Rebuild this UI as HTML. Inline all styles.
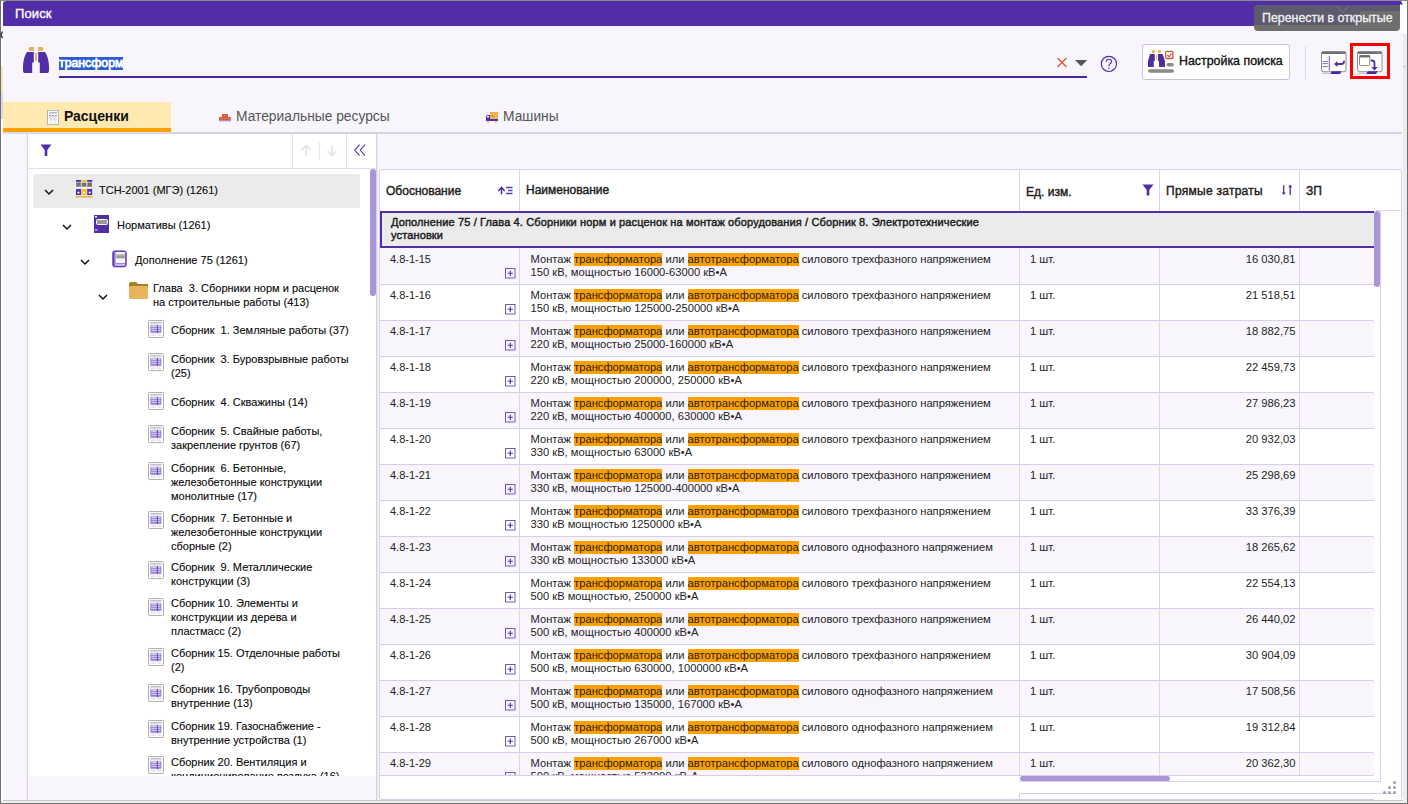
<!DOCTYPE html><html><head><meta charset="utf-8"><style>
*{box-sizing:border-box;margin:0;padding:0}
html,body{width:1408px;height:804px;overflow:hidden;background:#fff;font-family:"Liberation Sans",sans-serif;color:#222}
.a{position:absolute}
.t{position:absolute;white-space:pre;line-height:14px}
.m{-webkit-text-stroke:0.3px currentColor}
svg{position:absolute;overflow:visible}
</style></head><body>
<div class="a" style="left:0px;top:0px;width:1408px;height:804px;background:#fff;border:1px solid #707070;border-top-color:#8a8a8a"></div>
<div class="a" style="left:1402px;top:1px;width:5px;height:800px;background:#ececec"></div>
<div class="a" style="left:1402px;top:1px;width:5px;height:33px;background:#fff"></div>
<div class="a" style="left:1px;top:801px;width:1406px;height:2px;background:#efefef"></div>
<div class="a" style="left:1px;top:66px;width:2px;height:28px;background:#f2e4bc"></div>
<div class="a" style="left:1px;top:94px;width:2px;height:25px;background:#dcd5ee"></div>
<svg style="left:0px;top:31px" width="3" height="8" viewBox="0 0 3 8"><path d="M2.6 0.5 L0.6 3.8 L2.6 7.2" stroke="#333" stroke-width="1.4" fill="none"/></svg>
<div class="a" style="left:3px;top:26px;width:1400px;height:775px;background:#f8f5fc"></div>
<div class="a" style="left:3px;top:1px;width:1397px;height:25px;background:#512da8;border-top-left-radius:3px"></div>
<div class="t" style="left:15px;top:6.5px;color:#fff;font-size:13px;-webkit-text-stroke:0.35px #fff;letter-spacing:0.1px">Поиск</div>
<svg style="left:22px;top:46px" width="28" height="28" viewBox="0 0 28 28">
<rect x="7" y="1" width="5" height="4" fill="#e7b25c"/>
<rect x="16" y="1" width="5" height="4" fill="#e7b25c"/>
<rect x="13" y="7" width="2" height="8" fill="#e7b25c"/>
<path d="M5 6 H11.8 V16.6 H10.2 V27 H3 Q1 27 1 25 V20 Q1.5 11 5 6 Z" fill="#512da8"/>
<path d="M23 6 H16.2 V16.6 H17.8 V27 H25 Q27 27 27 25 V20 Q26.5 11 23 6 Z" fill="#512da8"/>
</svg>
<div class="a" style="left:59px;top:57px;width:64px;height:13px;background:#2b5bd7"></div>
<div class="t" style="left:59px;top:56px;color:#fff;font-size:12.3px;-webkit-text-stroke:0.75px #fff;line-height:15px">трансформ</div>
<div class="a" style="left:59px;top:76px;width:1028px;height:2px;background:#4a25a4"></div>
<svg style="left:1056px;top:57px" width="12" height="11" viewBox="0 0 12 11"><path d="M1.5 1 L10.5 10 M10.5 1 L1.5 10" stroke="#e0542a" stroke-width="1.25"/></svg>
<svg style="left:1075px;top:60px" width="13" height="7" viewBox="0 0 13 7"><path d="M0 0 H12.2 L6.1 6.2 Z" fill="#555"/></svg>
<svg style="left:1100px;top:55px" width="18" height="18" viewBox="0 0 18 18"><circle cx="8.9" cy="8.9" r="7.6" fill="none" stroke="#512da8" stroke-width="1.15"/><path d="M6.3 6.8 Q6.3 4.2 8.9 4.2 Q11.5 4.2 11.5 6.6 Q11.5 8.2 9.8 9 Q8.9 9.5 8.9 10.8 V11.3" stroke="#512da8" stroke-width="1.1" fill="none"/><circle cx="8.9" cy="13.3" r="0.75" fill="#512da8"/></svg>
<div class="a" style="left:1142px;top:44px;width:148px;height:36px;background:#fff;border:1px solid #cbbde8;border-radius:3px"></div>
<svg style="left:1147px;top:50px" width="28" height="24" viewBox="0 0 28 24">
<rect x="5" y="0.2" width="3" height="2.6" fill="#e7b25c"/>
<rect x="11" y="0.2" width="3" height="2.6" fill="#e7b25c"/>
<rect x="9" y="4.6" width="1.3" height="5" fill="#e7b25c"/>
<path d="M3 4 H7.8 V11 H6.8 V17 H1.3 Q1 17 1 16.5 V11 Z" fill="#4f2fa0"/>
<path d="M11 4 H15.6 L18 11 V16.5 Q18 17 17.5 17 H12 V11 H11 Z" fill="#4f2fa0"/>
<rect x="18.7" y="1.4" width="7.2" height="7.1" rx="1" fill="#fff" stroke="#d9503f" stroke-width="1.3"/>
<path d="M20.3 5 L22 6.6 L24.6 3.6" stroke="#d9503f" stroke-width="1.1" fill="none"/>
<rect x="19.5" y="13.1" width="7.4" height="3.4" rx="1.7" fill="#8a8a8a"/>
<rect x="1" y="19.3" width="26" height="3.4" rx="1.7" fill="#8a8a8a"/>
</svg>
<div class="t" style="left:1179px;top:54px;color:#111;font-size:12.4px;-webkit-text-stroke:0.35px #111;line-height:15px">Настройка поиска</div>
<div class="a" style="left:1305px;top:46px;width:1px;height:33px;background:#ddd6ee"></div>
<svg style="left:1320px;top:50px" width="28" height="25" viewBox="0 0 28 25"><rect x="1.5" y="1.75" width="24.5" height="20" rx="2" fill="#fff" stroke="#8e8e8e" stroke-width="1"/><rect x="1.5" y="1.5" width="24.5" height="2.6" rx="1" fill="#6e6e6e"/><path d="M21 2.8 H25" stroke="#bbb" stroke-width="0.7" stroke-dasharray="1 0.6"/><path d="M2 22.8 H10 L9.5 24 H3 Z" fill="#c4c4c4"/><path d="M12 21.3 H21.5 L20 24 H10 Z" fill="#4527a0"/>
<path d="M2.5 11.5 H8 M2.5 13.6 H8 M2.5 16.5 H8" stroke="#7e62c8" stroke-width="0.9"/>
<path d="M9.3 5.8 V20.6" stroke="#7e62c8" stroke-width="1.1"/>
<path d="M24 11.5 Q24 14 21.5 14 H16" stroke="#512da8" stroke-width="1.8" fill="none" stroke-linecap="round"/>
<path d="M17.5 11 L14 14 L17.5 17 Z" fill="#512da8"/>
</svg>
<div class="a" style="left:1350px;top:43px;width:40px;height:36px;border:3px solid #ff0000"></div>
<svg style="left:1356px;top:50px" width="28" height="25" viewBox="0 0 28 25"><rect x="1.5" y="1.75" width="24.5" height="20" rx="2" fill="#fff" stroke="#8e8e8e" stroke-width="1"/><rect x="1.5" y="1.5" width="24.5" height="2.6" rx="1" fill="#6e6e6e"/><path d="M21 2.8 H25" stroke="#bbb" stroke-width="0.7" stroke-dasharray="1 0.6"/><path d="M2 22.8 H10 L9.5 24 H3 Z" fill="#c4c4c4"/><path d="M12 21.3 H21.5 L20 24 H10 Z" fill="#4527a0"/>
<rect x="3.5" y="5.5" width="10.3" height="10" rx="1" fill="#fff" stroke="#8e8e8e" stroke-width="1"/>
<rect x="3.3" y="5.2" width="10.7" height="2.2" rx="0.8" fill="#6e6e6e"/>
<path d="M15.5 10.5 Q18.5 10.5 18.5 13 V18.5" stroke="#512da8" stroke-width="1.8" fill="none" stroke-linecap="round"/>
<path d="M15.3 17 L18.5 20.5 L21.7 17 Z" fill="#512da8"/>
</svg>
<div class="a" style="left:1403px;top:66px;width:3px;height:1px;background:#cbbde8"></div>
<div class="a" style="left:1400px;top:5px;width:7px;height:28px;background:#fff"></div>
<svg style="left:1398px;top:1px" width="6" height="5" viewBox="0 0 6 5"><path d="M0 0 H3 L5 3.5 H0 Z" fill="#512da8"/></svg>
<div class="a" style="left:1254px;top:5px;width:146px;height:26px;background:#6e6e6e;border-radius:4px;border-top-right-radius:0"></div>
<div class="a" style="left:1254px;top:5px;width:106px;height:20px;background:#5e5a6e;border-top-left-radius:4px"></div>
<div class="a" style="left:1360px;top:5px;width:40px;height:6px;background:#5e5a6e"></div>
<svg style="left:1336px;top:6px" width="14" height="8" viewBox="0 0 14 8"><path d="M0.5 0.5 L6.5 6.5 L12.5 0.5" stroke="#8a8694" stroke-width="0.7" fill="none"/></svg>
<div class="t" style="left:1262px;top:11px;color:#f2f2f2;font-size:12.4px;-webkit-text-stroke:0.3px #f2f2f2;line-height:15px">Перенести в открытые</div>
<div class="a" style="left:3px;top:102px;width:168px;height:26px;background:#ffe9b0"></div>
<div class="a" style="left:3px;top:128px;width:168px;height:4px;background:#ffa000"></div>
<div class="a" style="left:3px;top:132px;width:1399px;height:2px;background:#d6d3dc"></div>
<div class="a" style="left:3px;top:132px;width:168px;height:2px;background:#d8d8e6"></div>
<svg style="left:47px;top:110px" width="12" height="15" viewBox="0 0 12 15">
<rect x="0.5" y="0.6" width="11" height="13.8" fill="#fff" stroke="#b4b4b4"/>
<rect x="2" y="2.2" width="8" height="1.4" fill="#b0b0b0"/>
<path d="M2 5.5 H4 M4.8 5.5 H7.2 M8 5.5 H10" stroke="#9a7fd8" stroke-width="1"/>
<rect x="2" y="6.2" width="8" height="4.6" fill="#e8e8e8"/>
<path d="M4.4 6.2 V10.8 M7.6 6.2 V10.8" stroke="#d0d0d0" stroke-width="0.6"/>
<path d="M2 12.3 H5.3 M7 12.3 H10" stroke="#cfcfcf" stroke-width="0.7"/>
</svg>
<div class="t" style="left:64px;top:108px;color:#111;font-size:14px;font-weight:bold;letter-spacing:-0.05px;line-height:16px">Расценки</div>
<svg style="left:218px;top:113px" width="14" height="10" viewBox="0 0 14 10">
<rect x="4" y="1" width="6" height="3" fill="#dc5a3c"/>
<rect x="1" y="4" width="11.8" height="3" fill="#dc5a3c"/>
<path d="M6.5 5.5 H7.5 M3 5.5 H4 M10 5.5 H11 M6.5 2.5 H7.5" stroke="#f3b8a8" stroke-width="0.6"/>
<rect x="1" y="7" width="12" height="1.3" fill="#a58be0"/>
</svg>
<div class="t" style="left:236px;top:109px;color:#555;font-size:13.8px;line-height:16px">Материальные ресурсы</div>
<svg style="left:485px;top:111px" width="14" height="13" viewBox="0 0 14 13">
<rect x="5" y="1" width="8" height="7" fill="#f0b450"/>
<circle cx="7.5" cy="5" r="0.8" fill="#777"/>
<path d="M1 10 V6 Q1 4 3 4 H5 V9.5 H13 V10 Z" fill="#512da8"/>
<rect x="2" y="5" width="2" height="1.5" fill="#fff"/>
<rect x="1" y="8" width="12" height="2" fill="#512da8"/>
<circle cx="3" cy="11" r="1.2" fill="#ccc"/><circle cx="11" cy="11" r="1.2" fill="#ccc"/>
</svg>
<div class="t" style="left:503px;top:109px;color:#555;font-size:13.8px;line-height:16px">Машины</div>
<div class="a" style="left:27px;top:134px;width:350px;height:667px;background:#fff;border-left:1px solid #d8cdee"></div>
<div class="a" style="left:27px;top:168px;width:350px;height:1px;background:#e3dbf3"></div>
<div class="a" style="left:292px;top:134px;width:1px;height:34px;background:#e6e0f2"></div>
<div class="a" style="left:346px;top:134px;width:1px;height:34px;background:#e6e0f2"></div>
<div class="a" style="left:319px;top:142px;width:1px;height:18px;background:#e9e3f5"></div>
<svg style="left:40px;top:144px" width="13" height="13" viewBox="0 0 13 13"><path d="M0.5 0.5 H11.5 L7.3 6 V12 H4.7 V6 Z" fill="#512da8"/></svg>
<svg style="left:300px;top:144px" width="12" height="13" viewBox="0 0 12 13"><path d="M6 12 V1.5 M1.5 6 L6 1.5 L10.5 6" stroke="#e4e4e4" stroke-width="1.6" fill="none"/></svg>
<svg style="left:326px;top:144px" width="12" height="13" viewBox="0 0 12 13"><path d="M6 1 V11.5 M1.5 7 L6 11.5 L10.5 7" stroke="#e4e4e4" stroke-width="1.6" fill="none"/></svg>
<svg style="left:354px;top:144px" width="13" height="13" viewBox="0 0 13 13"><path d="M5.6 0.6 L0.8 6.1 L5.6 11.6 M11 0.6 L6.2 6.1 L11 11.6" stroke="#5b3dbb" stroke-width="1.1" fill="none"/></svg>
<div class="a" style="left:28px;top:776px;width:348px;height:25px;background:#f8f5fc"></div>
<div class="a" style="left:376px;top:134px;width:1px;height:667px;background:#d6d4da"></div>
<div class="a" style="left:377px;top:134px;width:1px;height:667px;background:#eaeaea"></div>
<div class="a" style="left:370px;top:169px;width:6px;height:127px;background:#a994d5;border-radius:3px"></div>
<div class="a" style="left:33px;top:174px;width:327px;height:34px;background:#ebebeb;border-radius:2px"></div>
<svg style="left:44px;top:189px" width="10" height="6" viewBox="0 0 10 6"><path d="M1 1 L5 5 L9 1" stroke="#111" stroke-width="1.45" fill="none"/></svg>
<svg style="left:75px;top:180px" width="18" height="18" viewBox="0 0 18 18">
<rect x="1" y="1.6" width="5" height="7.6" fill="#c9bde8"/>
<rect x="1" y="0" width="5" height="1.8" fill="#512da8"/>
<rect x="1.3" y="2.7" width="4.4" height="4" fill="#6e6e6e"/>
<rect x="1.3" y="5.6" width="4.4" height="1.1" fill="#8e8e8e"/>
<rect x="1.3" y="7" width="4.4" height="1.5" fill="#fff"/>
<rect x="1" y="9.1" width="5" height="5.9" fill="#512da8"/>
<circle cx="3.5" cy="12.6" r="1.1" fill="#fff"/>
<rect x="6.5" y="1.6" width="5" height="7.6" fill="#f6e2a0"/>
<rect x="6.5" y="0" width="5" height="1.8" fill="#f0c020"/>
<rect x="6.8" y="2.7" width="4.4" height="4" fill="#6e6e6e"/>
<rect x="6.8" y="5.6" width="4.4" height="1.1" fill="#8e8e8e"/>
<rect x="6.8" y="7" width="4.4" height="1.5" fill="#fff"/>
<rect x="6.5" y="9.1" width="5" height="5.9" fill="#f0c020"/>
<circle cx="9.0" cy="12.6" r="1.1" fill="#fff"/>
<rect x="12.2" y="1.6" width="5" height="7.6" fill="#c9bde8"/>
<rect x="12.2" y="0" width="5" height="1.8" fill="#512da8"/>
<rect x="12.5" y="2.7" width="4.4" height="4" fill="#6e6e6e"/>
<rect x="12.5" y="5.6" width="4.4" height="1.1" fill="#8e8e8e"/>
<rect x="12.5" y="7" width="4.4" height="1.5" fill="#fff"/>
<rect x="12.2" y="9.1" width="5" height="5.9" fill="#512da8"/>
<circle cx="14.7" cy="12.6" r="1.1" fill="#fff"/>
<rect x="0.5" y="15.9" width="17" height="1.7" fill="#e8b45e"/>
</svg>
<div class="t" style="left:99px;top:183.2px;color:#0a0a0a;font-size:11px;-webkit-text-stroke:0.12px #0a0a0a">ТСН-2001 (МГЭ) (1261)</div>
<svg style="left:62px;top:224px" width="10" height="6" viewBox="0 0 10 6"><path d="M1 1 L5 5 L9 1" stroke="#111" stroke-width="1.45" fill="none"/></svg>
<svg style="left:94px;top:215px" width="15" height="18" viewBox="0 0 15 18">
<rect x="0" y="0" width="15" height="18" fill="#512da8"/>
<rect x="1" y="1" width="2" height="1.5" fill="#fff"/>
<rect x="2.5" y="4.5" width="11" height="5" rx="1" fill="#9a9a9a" stroke="#fff" stroke-width="1"/>
<rect x="1" y="14.5" width="2.5" height="1" fill="#fff"/>
</svg>
<div class="t" style="left:117px;top:218.2px;color:#0a0a0a;font-size:11px;-webkit-text-stroke:0.12px #0a0a0a">Нормативы (1261)</div>
<svg style="left:80px;top:259px" width="10" height="6" viewBox="0 0 10 6"><path d="M1 1 L5 5 L9 1" stroke="#111" stroke-width="1.45" fill="none"/></svg>
<svg style="left:112px;top:250px" width="15" height="18" viewBox="0 0 15 18">
<rect x="0.5" y="0.8" width="14" height="16.2" rx="2.2" fill="#5a36b4" stroke="#7e62cc" stroke-width="0.8"/>
<rect x="2.6" y="2" width="10.6" height="13.6" fill="#fff"/>
<rect x="2.6" y="2" width="1" height="13.6" fill="#8e74d4"/>
<rect x="4.2" y="3.6" width="8.6" height="1.6" fill="#c8c8c8"/>
<rect x="4.2" y="5.2" width="8.6" height="3" fill="#9c9c9c"/>
<rect x="4.2" y="8.2" width="8.6" height="1.2" fill="#d4d4d4"/>
<rect x="4" y="13.2" width="9.2" height="1.2" fill="#7e62cc"/>
</svg>
<div class="t" style="left:135px;top:253.2px;color:#0a0a0a;font-size:11px;-webkit-text-stroke:0.12px #0a0a0a">Дополнение 75 (1261)</div>
<svg style="left:98px;top:294px" width="10" height="6" viewBox="0 0 10 6"><path d="M1 1 L5 5 L9 1" stroke="#111" stroke-width="1.45" fill="none"/></svg>
<svg style="left:129px;top:282px" width="19" height="17" viewBox="0 0 19 17">
<path d="M0 2 Q0 0 2 0 H7 L9 2 H19 V5 H0 Z" fill="#a87d2e"/>
<rect x="0" y="4" width="19" height="13" rx="1" fill="#e8b45e"/>
</svg>
<div class="t" style="left:153px;top:281.2px;color:#0a0a0a;font-size:11px;-webkit-text-stroke:0.12px #0a0a0a">Глава  3. Сборники норм и расценок</div>
<div class="t" style="left:153px;top:295.2px;color:#0a0a0a;font-size:11px;-webkit-text-stroke:0.12px #0a0a0a">на строительные работы (413)</div>
<div class="a" style="left:28px;top:169px;width:340px;height:607px;overflow:hidden">
<svg style="left:120px;top:151.3px" width="16" height="18" viewBox="0 0 16 18">
<rect x="0.5" y="0.5" width="15" height="17" rx="0.8" fill="#fff" stroke="#b0b0b0"/>
<rect x="2.2" y="1.8" width="11.5" height="1.8" fill="#c4c4c4"/>
<rect x="2.2" y="4.7" width="11.2" height="8.6" rx="1" fill="#b6a3e4"/>
<path d="M3.4 6.2 H8.8 M10 6.2 H12.2 M3.4 8.2 H8.8 M10 8.2 H12.2 M3.4 10.2 H8.8 M10 10.2 H12.2" stroke="#fff" stroke-width="1"/>
<path d="M9.4 5 V13" stroke="#5a3cb8" stroke-width="0.9"/>
<path d="M2.5 7.2 H13.2 M2.5 9.2 H13.2 M2.5 11.2 H13.2" stroke="#6a4cc0" stroke-width="0.6"/>
<path d="M3 15.1 H7.7 M9.2 15.1 H13.4" stroke="#c8c8c8" stroke-width="0.8"/>
</svg>
<div class="t" style="left:143px;top:154.2px;color:#0a0a0a;font-size:11px;-webkit-text-stroke:0.12px #0a0a0a">Сборник  1. Земляные работы (37)</div>
<svg style="left:120px;top:184.4px" width="16" height="18" viewBox="0 0 16 18">
<rect x="0.5" y="0.5" width="15" height="17" rx="0.8" fill="#fff" stroke="#b0b0b0"/>
<rect x="2.2" y="1.8" width="11.5" height="1.8" fill="#c4c4c4"/>
<rect x="2.2" y="4.7" width="11.2" height="8.6" rx="1" fill="#b6a3e4"/>
<path d="M3.4 6.2 H8.8 M10 6.2 H12.2 M3.4 8.2 H8.8 M10 8.2 H12.2 M3.4 10.2 H8.8 M10 10.2 H12.2" stroke="#fff" stroke-width="1"/>
<path d="M9.4 5 V13" stroke="#5a3cb8" stroke-width="0.9"/>
<path d="M2.5 7.2 H13.2 M2.5 9.2 H13.2 M2.5 11.2 H13.2" stroke="#6a4cc0" stroke-width="0.6"/>
<path d="M3 15.1 H7.7 M9.2 15.1 H13.4" stroke="#c8c8c8" stroke-width="0.8"/>
</svg>
<div class="t" style="left:143px;top:182.5px;color:#0a0a0a;font-size:11px;-webkit-text-stroke:0.12px #0a0a0a">Сборник  3. Буровзрывные работы</div>
<div class="t" style="left:143px;top:196.5px;color:#0a0a0a;font-size:11px;-webkit-text-stroke:0.12px #0a0a0a">(25)</div>
<svg style="left:120px;top:223.4px" width="16" height="18" viewBox="0 0 16 18">
<rect x="0.5" y="0.5" width="15" height="17" rx="0.8" fill="#fff" stroke="#b0b0b0"/>
<rect x="2.2" y="1.8" width="11.5" height="1.8" fill="#c4c4c4"/>
<rect x="2.2" y="4.7" width="11.2" height="8.6" rx="1" fill="#b6a3e4"/>
<path d="M3.4 6.2 H8.8 M10 6.2 H12.2 M3.4 8.2 H8.8 M10 8.2 H12.2 M3.4 10.2 H8.8 M10 10.2 H12.2" stroke="#fff" stroke-width="1"/>
<path d="M9.4 5 V13" stroke="#5a3cb8" stroke-width="0.9"/>
<path d="M2.5 7.2 H13.2 M2.5 9.2 H13.2 M2.5 11.2 H13.2" stroke="#6a4cc0" stroke-width="0.6"/>
<path d="M3 15.1 H7.7 M9.2 15.1 H13.4" stroke="#c8c8c8" stroke-width="0.8"/>
</svg>
<div class="t" style="left:143px;top:226.2px;color:#0a0a0a;font-size:11px;-webkit-text-stroke:0.12px #0a0a0a">Сборник  4. Скважины (14)</div>
<svg style="left:120px;top:256.3px" width="16" height="18" viewBox="0 0 16 18">
<rect x="0.5" y="0.5" width="15" height="17" rx="0.8" fill="#fff" stroke="#b0b0b0"/>
<rect x="2.2" y="1.8" width="11.5" height="1.8" fill="#c4c4c4"/>
<rect x="2.2" y="4.7" width="11.2" height="8.6" rx="1" fill="#b6a3e4"/>
<path d="M3.4 6.2 H8.8 M10 6.2 H12.2 M3.4 8.2 H8.8 M10 8.2 H12.2 M3.4 10.2 H8.8 M10 10.2 H12.2" stroke="#fff" stroke-width="1"/>
<path d="M9.4 5 V13" stroke="#5a3cb8" stroke-width="0.9"/>
<path d="M2.5 7.2 H13.2 M2.5 9.2 H13.2 M2.5 11.2 H13.2" stroke="#6a4cc0" stroke-width="0.6"/>
<path d="M3 15.1 H7.7 M9.2 15.1 H13.4" stroke="#c8c8c8" stroke-width="0.8"/>
</svg>
<div class="t" style="left:143px;top:255.4px;color:#0a0a0a;font-size:11px;-webkit-text-stroke:0.12px #0a0a0a">Сборник  5. Свайные работы,</div>
<div class="t" style="left:143px;top:269.4px;color:#0a0a0a;font-size:11px;-webkit-text-stroke:0.12px #0a0a0a">закрепление грунтов (67)</div>
<svg style="left:120px;top:292.6px" width="16" height="18" viewBox="0 0 16 18">
<rect x="0.5" y="0.5" width="15" height="17" rx="0.8" fill="#fff" stroke="#b0b0b0"/>
<rect x="2.2" y="1.8" width="11.5" height="1.8" fill="#c4c4c4"/>
<rect x="2.2" y="4.7" width="11.2" height="8.6" rx="1" fill="#b6a3e4"/>
<path d="M3.4 6.2 H8.8 M10 6.2 H12.2 M3.4 8.2 H8.8 M10 8.2 H12.2 M3.4 10.2 H8.8 M10 10.2 H12.2" stroke="#fff" stroke-width="1"/>
<path d="M9.4 5 V13" stroke="#5a3cb8" stroke-width="0.9"/>
<path d="M2.5 7.2 H13.2 M2.5 9.2 H13.2 M2.5 11.2 H13.2" stroke="#6a4cc0" stroke-width="0.6"/>
<path d="M3 15.1 H7.7 M9.2 15.1 H13.4" stroke="#c8c8c8" stroke-width="0.8"/>
</svg>
<div class="t" style="left:143px;top:291.7px;color:#0a0a0a;font-size:11px;-webkit-text-stroke:0.12px #0a0a0a">Сборник  6. Бетонные,</div>
<div class="t" style="left:143px;top:305.7px;color:#0a0a0a;font-size:11px;-webkit-text-stroke:0.12px #0a0a0a">железобетонные конструкции</div>
<div class="t" style="left:143px;top:319.7px;color:#0a0a0a;font-size:11px;-webkit-text-stroke:0.12px #0a0a0a">монолитные (17)</div>
<svg style="left:120px;top:342.3px" width="16" height="18" viewBox="0 0 16 18">
<rect x="0.5" y="0.5" width="15" height="17" rx="0.8" fill="#fff" stroke="#b0b0b0"/>
<rect x="2.2" y="1.8" width="11.5" height="1.8" fill="#c4c4c4"/>
<rect x="2.2" y="4.7" width="11.2" height="8.6" rx="1" fill="#b6a3e4"/>
<path d="M3.4 6.2 H8.8 M10 6.2 H12.2 M3.4 8.2 H8.8 M10 8.2 H12.2 M3.4 10.2 H8.8 M10 10.2 H12.2" stroke="#fff" stroke-width="1"/>
<path d="M9.4 5 V13" stroke="#5a3cb8" stroke-width="0.9"/>
<path d="M2.5 7.2 H13.2 M2.5 9.2 H13.2 M2.5 11.2 H13.2" stroke="#6a4cc0" stroke-width="0.6"/>
<path d="M3 15.1 H7.7 M9.2 15.1 H13.4" stroke="#c8c8c8" stroke-width="0.8"/>
</svg>
<div class="t" style="left:143px;top:341.5px;color:#0a0a0a;font-size:11px;-webkit-text-stroke:0.12px #0a0a0a">Сборник  7. Бетонные и</div>
<div class="t" style="left:143px;top:355.5px;color:#0a0a0a;font-size:11px;-webkit-text-stroke:0.12px #0a0a0a">железобетонные конструкции</div>
<div class="t" style="left:143px;top:369.5px;color:#0a0a0a;font-size:11px;-webkit-text-stroke:0.12px #0a0a0a">сборные (2)</div>
<svg style="left:120px;top:392.4px" width="16" height="18" viewBox="0 0 16 18">
<rect x="0.5" y="0.5" width="15" height="17" rx="0.8" fill="#fff" stroke="#b0b0b0"/>
<rect x="2.2" y="1.8" width="11.5" height="1.8" fill="#c4c4c4"/>
<rect x="2.2" y="4.7" width="11.2" height="8.6" rx="1" fill="#b6a3e4"/>
<path d="M3.4 6.2 H8.8 M10 6.2 H12.2 M3.4 8.2 H8.8 M10 8.2 H12.2 M3.4 10.2 H8.8 M10 10.2 H12.2" stroke="#fff" stroke-width="1"/>
<path d="M9.4 5 V13" stroke="#5a3cb8" stroke-width="0.9"/>
<path d="M2.5 7.2 H13.2 M2.5 9.2 H13.2 M2.5 11.2 H13.2" stroke="#6a4cc0" stroke-width="0.6"/>
<path d="M3 15.1 H7.7 M9.2 15.1 H13.4" stroke="#c8c8c8" stroke-width="0.8"/>
</svg>
<div class="t" style="left:143px;top:391.2px;color:#0a0a0a;font-size:11px;-webkit-text-stroke:0.12px #0a0a0a">Сборник  9. Металлические</div>
<div class="t" style="left:143px;top:405.2px;color:#0a0a0a;font-size:11px;-webkit-text-stroke:0.12px #0a0a0a">конструкции (3)</div>
<svg style="left:120px;top:428.5px" width="16" height="18" viewBox="0 0 16 18">
<rect x="0.5" y="0.5" width="15" height="17" rx="0.8" fill="#fff" stroke="#b0b0b0"/>
<rect x="2.2" y="1.8" width="11.5" height="1.8" fill="#c4c4c4"/>
<rect x="2.2" y="4.7" width="11.2" height="8.6" rx="1" fill="#b6a3e4"/>
<path d="M3.4 6.2 H8.8 M10 6.2 H12.2 M3.4 8.2 H8.8 M10 8.2 H12.2 M3.4 10.2 H8.8 M10 10.2 H12.2" stroke="#fff" stroke-width="1"/>
<path d="M9.4 5 V13" stroke="#5a3cb8" stroke-width="0.9"/>
<path d="M2.5 7.2 H13.2 M2.5 9.2 H13.2 M2.5 11.2 H13.2" stroke="#6a4cc0" stroke-width="0.6"/>
<path d="M3 15.1 H7.7 M9.2 15.1 H13.4" stroke="#c8c8c8" stroke-width="0.8"/>
</svg>
<div class="t" style="left:143px;top:427.2px;color:#0a0a0a;font-size:11px;-webkit-text-stroke:0.12px #0a0a0a">Сборник 10. Элементы и</div>
<div class="t" style="left:143px;top:441.2px;color:#0a0a0a;font-size:11px;-webkit-text-stroke:0.12px #0a0a0a">конструкции из дерева и</div>
<div class="t" style="left:143px;top:455.2px;color:#0a0a0a;font-size:11px;-webkit-text-stroke:0.12px #0a0a0a">пластмасс (2)</div>
<svg style="left:120px;top:478.5px" width="16" height="18" viewBox="0 0 16 18">
<rect x="0.5" y="0.5" width="15" height="17" rx="0.8" fill="#fff" stroke="#b0b0b0"/>
<rect x="2.2" y="1.8" width="11.5" height="1.8" fill="#c4c4c4"/>
<rect x="2.2" y="4.7" width="11.2" height="8.6" rx="1" fill="#b6a3e4"/>
<path d="M3.4 6.2 H8.8 M10 6.2 H12.2 M3.4 8.2 H8.8 M10 8.2 H12.2 M3.4 10.2 H8.8 M10 10.2 H12.2" stroke="#fff" stroke-width="1"/>
<path d="M9.4 5 V13" stroke="#5a3cb8" stroke-width="0.9"/>
<path d="M2.5 7.2 H13.2 M2.5 9.2 H13.2 M2.5 11.2 H13.2" stroke="#6a4cc0" stroke-width="0.6"/>
<path d="M3 15.1 H7.7 M9.2 15.1 H13.4" stroke="#c8c8c8" stroke-width="0.8"/>
</svg>
<div class="t" style="left:143px;top:477.3px;color:#0a0a0a;font-size:11px;-webkit-text-stroke:0.12px #0a0a0a">Сборник 15. Отделочные работы</div>
<div class="t" style="left:143px;top:491.3px;color:#0a0a0a;font-size:11px;-webkit-text-stroke:0.12px #0a0a0a">(2)</div>
<svg style="left:120px;top:514.6px" width="16" height="18" viewBox="0 0 16 18">
<rect x="0.5" y="0.5" width="15" height="17" rx="0.8" fill="#fff" stroke="#b0b0b0"/>
<rect x="2.2" y="1.8" width="11.5" height="1.8" fill="#c4c4c4"/>
<rect x="2.2" y="4.7" width="11.2" height="8.6" rx="1" fill="#b6a3e4"/>
<path d="M3.4 6.2 H8.8 M10 6.2 H12.2 M3.4 8.2 H8.8 M10 8.2 H12.2 M3.4 10.2 H8.8 M10 10.2 H12.2" stroke="#fff" stroke-width="1"/>
<path d="M9.4 5 V13" stroke="#5a3cb8" stroke-width="0.9"/>
<path d="M2.5 7.2 H13.2 M2.5 9.2 H13.2 M2.5 11.2 H13.2" stroke="#6a4cc0" stroke-width="0.6"/>
<path d="M3 15.1 H7.7 M9.2 15.1 H13.4" stroke="#c8c8c8" stroke-width="0.8"/>
</svg>
<div class="t" style="left:143px;top:513.4px;color:#0a0a0a;font-size:11px;-webkit-text-stroke:0.12px #0a0a0a">Сборник 16. Трубопроводы</div>
<div class="t" style="left:143px;top:527.4px;color:#0a0a0a;font-size:11px;-webkit-text-stroke:0.12px #0a0a0a">внутренние (13)</div>
<svg style="left:120px;top:551px" width="16" height="18" viewBox="0 0 16 18">
<rect x="0.5" y="0.5" width="15" height="17" rx="0.8" fill="#fff" stroke="#b0b0b0"/>
<rect x="2.2" y="1.8" width="11.5" height="1.8" fill="#c4c4c4"/>
<rect x="2.2" y="4.7" width="11.2" height="8.6" rx="1" fill="#b6a3e4"/>
<path d="M3.4 6.2 H8.8 M10 6.2 H12.2 M3.4 8.2 H8.8 M10 8.2 H12.2 M3.4 10.2 H8.8 M10 10.2 H12.2" stroke="#fff" stroke-width="1"/>
<path d="M9.4 5 V13" stroke="#5a3cb8" stroke-width="0.9"/>
<path d="M2.5 7.2 H13.2 M2.5 9.2 H13.2 M2.5 11.2 H13.2" stroke="#6a4cc0" stroke-width="0.6"/>
<path d="M3 15.1 H7.7 M9.2 15.1 H13.4" stroke="#c8c8c8" stroke-width="0.8"/>
</svg>
<div class="t" style="left:143px;top:549.8px;color:#0a0a0a;font-size:11px;-webkit-text-stroke:0.12px #0a0a0a">Сборник 19. Газоснабжение -</div>
<div class="t" style="left:143px;top:563.8px;color:#0a0a0a;font-size:11px;-webkit-text-stroke:0.12px #0a0a0a">внутренние устройства (1)</div>
<svg style="left:120px;top:587.1px" width="16" height="18" viewBox="0 0 16 18">
<rect x="0.5" y="0.5" width="15" height="17" rx="0.8" fill="#fff" stroke="#b0b0b0"/>
<rect x="2.2" y="1.8" width="11.5" height="1.8" fill="#c4c4c4"/>
<rect x="2.2" y="4.7" width="11.2" height="8.6" rx="1" fill="#b6a3e4"/>
<path d="M3.4 6.2 H8.8 M10 6.2 H12.2 M3.4 8.2 H8.8 M10 8.2 H12.2 M3.4 10.2 H8.8 M10 10.2 H12.2" stroke="#fff" stroke-width="1"/>
<path d="M9.4 5 V13" stroke="#5a3cb8" stroke-width="0.9"/>
<path d="M2.5 7.2 H13.2 M2.5 9.2 H13.2 M2.5 11.2 H13.2" stroke="#6a4cc0" stroke-width="0.6"/>
<path d="M3 15.1 H7.7 M9.2 15.1 H13.4" stroke="#c8c8c8" stroke-width="0.8"/>
</svg>
<div class="t" style="left:143px;top:585.9px;color:#0a0a0a;font-size:11px;-webkit-text-stroke:0.12px #0a0a0a">Сборник 20. Вентиляция и</div>
<div class="t" style="left:143px;top:599.9px;color:#0a0a0a;font-size:11px;-webkit-text-stroke:0.12px #0a0a0a">кондиционирование воздуха (16)</div>
</div>
<div class="a" style="left:379px;top:169px;width:1023px;height:631px;background:#fff;border:1px solid #d8cdee;border-radius:3px"></div>
<div class="a" style="left:519px;top:170px;width:1px;height:41px;background:#ddd3f0"></div>
<div class="a" style="left:1019px;top:170px;width:1px;height:41px;background:#ddd3f0"></div>
<div class="a" style="left:1159px;top:170px;width:1px;height:41px;background:#ddd3f0"></div>
<div class="a" style="left:1299px;top:170px;width:1px;height:41px;background:#ddd3f0"></div>
<div class="t" style="left:386px;top:184px;color:#222;font-size:12px;-webkit-text-stroke:0.42px #222;line-height:14px">Обоснование</div>
<div class="t" style="left:526px;top:183px;color:#222;font-size:12px;-webkit-text-stroke:0.42px #222;line-height:14px">Наименование</div>
<div class="t" style="left:1026px;top:185px;color:#222;font-size:12px;-webkit-text-stroke:0.42px #222;line-height:14px">Ед. изм.</div>
<div class="t" style="left:1166px;top:184px;color:#222;font-size:12px;-webkit-text-stroke:0.42px #222;line-height:14px;letter-spacing:0.27px">Прямые затраты</div>
<div class="t" style="left:1306px;top:184px;color:#222;font-size:12px;-webkit-text-stroke:0.42px #222;line-height:14px">ЗП</div>
<svg style="left:497px;top:185.5px" width="17" height="10" viewBox="0 0 17 10">
<path d="M4.5 8.3 V1 M1.3 4.9 L4.5 1.3 L7.7 4.9" stroke="#4a28a6" stroke-width="1.5" fill="none"/>
<path d="M9 1.5 H15.5 M11 4.5 H15.5 M9 7.4 H15.5" stroke="#5a3cb4" stroke-width="1.5"/>
</svg>
<svg style="left:1142px;top:184px" width="12" height="12" viewBox="0 0 12 12"><path d="M0.5 0.5 H11.5 L7.3 6 V11.5 H4.7 V6 Z" fill="#512da8"/></svg>
<svg style="left:1280px;top:183px" width="14" height="13" viewBox="0 0 14 13">
<path d="M3.7 2.2 V10.5 M10.2 4 V12" stroke="#512da8" stroke-width="1.3"/>
<path d="M1.6 9.4 H5.8 L3.7 12 Z M8.1 4.2 H12.3 L10.2 1.4 Z" fill="#512da8"/>
</svg>
<div class="a" style="left:380px;top:248px;width:994px;height:527px;overflow:hidden">
<div class="a" style="left:0px;top:0px;width:1000px;height:37px;background:#f8f5fc"></div>
<div class="a" style="left:0px;top:36px;width:1000px;height:37px;background:#fff"></div>
<div class="a" style="left:0px;top:72px;width:1000px;height:37px;background:#f8f5fc"></div>
<div class="a" style="left:0px;top:108px;width:1000px;height:37px;background:#fff"></div>
<div class="a" style="left:0px;top:144px;width:1000px;height:37px;background:#f8f5fc"></div>
<div class="a" style="left:0px;top:180px;width:1000px;height:37px;background:#fff"></div>
<div class="a" style="left:0px;top:216px;width:1000px;height:37px;background:#f8f5fc"></div>
<div class="a" style="left:0px;top:252px;width:1000px;height:37px;background:#fff"></div>
<div class="a" style="left:0px;top:288px;width:1000px;height:37px;background:#f8f5fc"></div>
<div class="a" style="left:0px;top:324px;width:1000px;height:37px;background:#fff"></div>
<div class="a" style="left:0px;top:360px;width:1000px;height:37px;background:#f8f5fc"></div>
<div class="a" style="left:0px;top:396px;width:1000px;height:37px;background:#fff"></div>
<div class="a" style="left:0px;top:432px;width:1000px;height:37px;background:#f8f5fc"></div>
<div class="a" style="left:0px;top:468px;width:1000px;height:37px;background:#fff"></div>
<div class="a" style="left:0px;top:504px;width:1000px;height:37px;background:#f8f5fc"></div>
<div class="a" style="left:0px;top:36px;width:1000px;height:1px;background:#d8cdee"></div>
<div class="a" style="left:139px;top:0px;width:1px;height:36px;background:#ddd3f0"></div>
<div class="a" style="left:639px;top:0px;width:1px;height:36px;background:#ddd3f0"></div>
<div class="a" style="left:779px;top:0px;width:1px;height:36px;background:#ddd3f0"></div>
<div class="a" style="left:919px;top:0px;width:1px;height:36px;background:#ddd3f0"></div>
<div class="a" style="left:0px;top:72px;width:1000px;height:1px;background:#d8cdee"></div>
<div class="a" style="left:139px;top:36px;width:1px;height:36px;background:#ddd3f0"></div>
<div class="a" style="left:639px;top:36px;width:1px;height:36px;background:#ddd3f0"></div>
<div class="a" style="left:779px;top:36px;width:1px;height:36px;background:#ddd3f0"></div>
<div class="a" style="left:919px;top:36px;width:1px;height:36px;background:#ddd3f0"></div>
<div class="a" style="left:0px;top:108px;width:1000px;height:1px;background:#d8cdee"></div>
<div class="a" style="left:139px;top:72px;width:1px;height:36px;background:#ddd3f0"></div>
<div class="a" style="left:639px;top:72px;width:1px;height:36px;background:#ddd3f0"></div>
<div class="a" style="left:779px;top:72px;width:1px;height:36px;background:#ddd3f0"></div>
<div class="a" style="left:919px;top:72px;width:1px;height:36px;background:#ddd3f0"></div>
<div class="a" style="left:0px;top:144px;width:1000px;height:1px;background:#d8cdee"></div>
<div class="a" style="left:139px;top:108px;width:1px;height:36px;background:#ddd3f0"></div>
<div class="a" style="left:639px;top:108px;width:1px;height:36px;background:#ddd3f0"></div>
<div class="a" style="left:779px;top:108px;width:1px;height:36px;background:#ddd3f0"></div>
<div class="a" style="left:919px;top:108px;width:1px;height:36px;background:#ddd3f0"></div>
<div class="a" style="left:0px;top:180px;width:1000px;height:1px;background:#d8cdee"></div>
<div class="a" style="left:139px;top:144px;width:1px;height:36px;background:#ddd3f0"></div>
<div class="a" style="left:639px;top:144px;width:1px;height:36px;background:#ddd3f0"></div>
<div class="a" style="left:779px;top:144px;width:1px;height:36px;background:#ddd3f0"></div>
<div class="a" style="left:919px;top:144px;width:1px;height:36px;background:#ddd3f0"></div>
<div class="a" style="left:0px;top:216px;width:1000px;height:1px;background:#d8cdee"></div>
<div class="a" style="left:139px;top:180px;width:1px;height:36px;background:#ddd3f0"></div>
<div class="a" style="left:639px;top:180px;width:1px;height:36px;background:#ddd3f0"></div>
<div class="a" style="left:779px;top:180px;width:1px;height:36px;background:#ddd3f0"></div>
<div class="a" style="left:919px;top:180px;width:1px;height:36px;background:#ddd3f0"></div>
<div class="a" style="left:0px;top:252px;width:1000px;height:1px;background:#d8cdee"></div>
<div class="a" style="left:139px;top:216px;width:1px;height:36px;background:#ddd3f0"></div>
<div class="a" style="left:639px;top:216px;width:1px;height:36px;background:#ddd3f0"></div>
<div class="a" style="left:779px;top:216px;width:1px;height:36px;background:#ddd3f0"></div>
<div class="a" style="left:919px;top:216px;width:1px;height:36px;background:#ddd3f0"></div>
<div class="a" style="left:0px;top:288px;width:1000px;height:1px;background:#d8cdee"></div>
<div class="a" style="left:139px;top:252px;width:1px;height:36px;background:#ddd3f0"></div>
<div class="a" style="left:639px;top:252px;width:1px;height:36px;background:#ddd3f0"></div>
<div class="a" style="left:779px;top:252px;width:1px;height:36px;background:#ddd3f0"></div>
<div class="a" style="left:919px;top:252px;width:1px;height:36px;background:#ddd3f0"></div>
<div class="a" style="left:0px;top:324px;width:1000px;height:1px;background:#d8cdee"></div>
<div class="a" style="left:139px;top:288px;width:1px;height:36px;background:#ddd3f0"></div>
<div class="a" style="left:639px;top:288px;width:1px;height:36px;background:#ddd3f0"></div>
<div class="a" style="left:779px;top:288px;width:1px;height:36px;background:#ddd3f0"></div>
<div class="a" style="left:919px;top:288px;width:1px;height:36px;background:#ddd3f0"></div>
<div class="a" style="left:0px;top:360px;width:1000px;height:1px;background:#d8cdee"></div>
<div class="a" style="left:139px;top:324px;width:1px;height:36px;background:#ddd3f0"></div>
<div class="a" style="left:639px;top:324px;width:1px;height:36px;background:#ddd3f0"></div>
<div class="a" style="left:779px;top:324px;width:1px;height:36px;background:#ddd3f0"></div>
<div class="a" style="left:919px;top:324px;width:1px;height:36px;background:#ddd3f0"></div>
<div class="a" style="left:0px;top:396px;width:1000px;height:1px;background:#d8cdee"></div>
<div class="a" style="left:139px;top:360px;width:1px;height:36px;background:#ddd3f0"></div>
<div class="a" style="left:639px;top:360px;width:1px;height:36px;background:#ddd3f0"></div>
<div class="a" style="left:779px;top:360px;width:1px;height:36px;background:#ddd3f0"></div>
<div class="a" style="left:919px;top:360px;width:1px;height:36px;background:#ddd3f0"></div>
<div class="a" style="left:0px;top:432px;width:1000px;height:1px;background:#d8cdee"></div>
<div class="a" style="left:139px;top:396px;width:1px;height:36px;background:#ddd3f0"></div>
<div class="a" style="left:639px;top:396px;width:1px;height:36px;background:#ddd3f0"></div>
<div class="a" style="left:779px;top:396px;width:1px;height:36px;background:#ddd3f0"></div>
<div class="a" style="left:919px;top:396px;width:1px;height:36px;background:#ddd3f0"></div>
<div class="a" style="left:0px;top:468px;width:1000px;height:1px;background:#d8cdee"></div>
<div class="a" style="left:139px;top:432px;width:1px;height:36px;background:#ddd3f0"></div>
<div class="a" style="left:639px;top:432px;width:1px;height:36px;background:#ddd3f0"></div>
<div class="a" style="left:779px;top:432px;width:1px;height:36px;background:#ddd3f0"></div>
<div class="a" style="left:919px;top:432px;width:1px;height:36px;background:#ddd3f0"></div>
<div class="a" style="left:0px;top:504px;width:1000px;height:1px;background:#d8cdee"></div>
<div class="a" style="left:139px;top:468px;width:1px;height:36px;background:#ddd3f0"></div>
<div class="a" style="left:639px;top:468px;width:1px;height:36px;background:#ddd3f0"></div>
<div class="a" style="left:779px;top:468px;width:1px;height:36px;background:#ddd3f0"></div>
<div class="a" style="left:919px;top:468px;width:1px;height:36px;background:#ddd3f0"></div>
<div class="a" style="left:0px;top:540px;width:1000px;height:1px;background:#d8cdee"></div>
<div class="a" style="left:139px;top:504px;width:1px;height:36px;background:#ddd3f0"></div>
<div class="a" style="left:639px;top:504px;width:1px;height:36px;background:#ddd3f0"></div>
<div class="a" style="left:779px;top:504px;width:1px;height:36px;background:#ddd3f0"></div>
<div class="a" style="left:919px;top:504px;width:1px;height:36px;background:#ddd3f0"></div>
<div class="t" style="left:10px;top:4.2px;color:#242424;font-size:11.18px;font-size:11px">4.8-1-15</div>
<svg style="left:125px;top:20px" width="11" height="11" viewBox="0 0 11 11"><rect x="0.5" y="0.5" width="9.5" height="9.5" fill="none" stroke="#7058c4" stroke-width="1"/><path d="M5.25 2.6 V7.9 M2.6 5.25 H7.9" stroke="#512da8" stroke-width="1.1"/></svg>
<div class="t" style="left:150.5px;top:5.3px;color:#242424;font-size:11.18px;line-height:13px">Монтаж <span style="background:#ffa000;padding:0.4px 0 0.6px">трансформатора</span> или <span style="background:#ffa000;padding:0.4px 0 0.6px">автотрансформатора</span> силового трехфазного напряжением</div>
<div class="t" style="left:150.5px;top:18.3px;color:#242424;font-size:11.18px;line-height:13px">150 кВ, мощностью 16000-63000 кВ•А</div>
<div class="t" style="left:650px;top:4.0px;color:#242424;font-size:11.18px">1 шт.</div>
<div class="t" style="left:780px;top:4.0px;width:135.5px;text-align:right;color:#242424;font-size:11.18px">16 030,81</div>
<div class="t" style="left:10px;top:40.2px;color:#242424;font-size:11.18px;font-size:11px">4.8-1-16</div>
<svg style="left:125px;top:56px" width="11" height="11" viewBox="0 0 11 11"><rect x="0.5" y="0.5" width="9.5" height="9.5" fill="none" stroke="#7058c4" stroke-width="1"/><path d="M5.25 2.6 V7.9 M2.6 5.25 H7.9" stroke="#512da8" stroke-width="1.1"/></svg>
<div class="t" style="left:150.5px;top:41.3px;color:#242424;font-size:11.18px;line-height:13px">Монтаж <span style="background:#ffa000;padding:0.4px 0 0.6px">трансформатора</span> или <span style="background:#ffa000;padding:0.4px 0 0.6px">автотрансформатора</span> силового трехфазного напряжением</div>
<div class="t" style="left:150.5px;top:54.3px;color:#242424;font-size:11.18px;line-height:13px">150 кВ, мощностью 125000-250000 кВ•А</div>
<div class="t" style="left:650px;top:40.0px;color:#242424;font-size:11.18px">1 шт.</div>
<div class="t" style="left:780px;top:40.0px;width:135.5px;text-align:right;color:#242424;font-size:11.18px">21 518,51</div>
<div class="t" style="left:10px;top:76.2px;color:#242424;font-size:11.18px;font-size:11px">4.8-1-17</div>
<svg style="left:125px;top:92px" width="11" height="11" viewBox="0 0 11 11"><rect x="0.5" y="0.5" width="9.5" height="9.5" fill="none" stroke="#7058c4" stroke-width="1"/><path d="M5.25 2.6 V7.9 M2.6 5.25 H7.9" stroke="#512da8" stroke-width="1.1"/></svg>
<div class="t" style="left:150.5px;top:77.3px;color:#242424;font-size:11.18px;line-height:13px">Монтаж <span style="background:#ffa000;padding:0.4px 0 0.6px">трансформатора</span> или <span style="background:#ffa000;padding:0.4px 0 0.6px">автотрансформатора</span> силового трехфазного напряжением</div>
<div class="t" style="left:150.5px;top:90.3px;color:#242424;font-size:11.18px;line-height:13px">220 кВ, мощностью 25000-160000 кВ•А</div>
<div class="t" style="left:650px;top:76.0px;color:#242424;font-size:11.18px">1 шт.</div>
<div class="t" style="left:780px;top:76.0px;width:135.5px;text-align:right;color:#242424;font-size:11.18px">18 882,75</div>
<div class="t" style="left:10px;top:112.2px;color:#242424;font-size:11.18px;font-size:11px">4.8-1-18</div>
<svg style="left:125px;top:128px" width="11" height="11" viewBox="0 0 11 11"><rect x="0.5" y="0.5" width="9.5" height="9.5" fill="none" stroke="#7058c4" stroke-width="1"/><path d="M5.25 2.6 V7.9 M2.6 5.25 H7.9" stroke="#512da8" stroke-width="1.1"/></svg>
<div class="t" style="left:150.5px;top:113.3px;color:#242424;font-size:11.18px;line-height:13px">Монтаж <span style="background:#ffa000;padding:0.4px 0 0.6px">трансформатора</span> или <span style="background:#ffa000;padding:0.4px 0 0.6px">автотрансформатора</span> силового трехфазного напряжением</div>
<div class="t" style="left:150.5px;top:126.3px;color:#242424;font-size:11.18px;line-height:13px">220 кВ, мощностью 200000, 250000 кВ•А</div>
<div class="t" style="left:650px;top:112.0px;color:#242424;font-size:11.18px">1 шт.</div>
<div class="t" style="left:780px;top:112.0px;width:135.5px;text-align:right;color:#242424;font-size:11.18px">22 459,73</div>
<div class="t" style="left:10px;top:148.2px;color:#242424;font-size:11.18px;font-size:11px">4.8-1-19</div>
<svg style="left:125px;top:164px" width="11" height="11" viewBox="0 0 11 11"><rect x="0.5" y="0.5" width="9.5" height="9.5" fill="none" stroke="#7058c4" stroke-width="1"/><path d="M5.25 2.6 V7.9 M2.6 5.25 H7.9" stroke="#512da8" stroke-width="1.1"/></svg>
<div class="t" style="left:150.5px;top:149.3px;color:#242424;font-size:11.18px;line-height:13px">Монтаж <span style="background:#ffa000;padding:0.4px 0 0.6px">трансформатора</span> или <span style="background:#ffa000;padding:0.4px 0 0.6px">автотрансформатора</span> силового трехфазного напряжением</div>
<div class="t" style="left:150.5px;top:162.3px;color:#242424;font-size:11.18px;line-height:13px">220 кВ, мощностью 400000, 630000 кВ•А</div>
<div class="t" style="left:650px;top:148.0px;color:#242424;font-size:11.18px">1 шт.</div>
<div class="t" style="left:780px;top:148.0px;width:135.5px;text-align:right;color:#242424;font-size:11.18px">27 986,23</div>
<div class="t" style="left:10px;top:184.2px;color:#242424;font-size:11.18px;font-size:11px">4.8-1-20</div>
<svg style="left:125px;top:200px" width="11" height="11" viewBox="0 0 11 11"><rect x="0.5" y="0.5" width="9.5" height="9.5" fill="none" stroke="#7058c4" stroke-width="1"/><path d="M5.25 2.6 V7.9 M2.6 5.25 H7.9" stroke="#512da8" stroke-width="1.1"/></svg>
<div class="t" style="left:150.5px;top:185.3px;color:#242424;font-size:11.18px;line-height:13px">Монтаж <span style="background:#ffa000;padding:0.4px 0 0.6px">трансформатора</span> или <span style="background:#ffa000;padding:0.4px 0 0.6px">автотрансформатора</span> силового трехфазного напряжением</div>
<div class="t" style="left:150.5px;top:198.3px;color:#242424;font-size:11.18px;line-height:13px">330 кВ, мощностью 63000 кВ•А</div>
<div class="t" style="left:650px;top:184.0px;color:#242424;font-size:11.18px">1 шт.</div>
<div class="t" style="left:780px;top:184.0px;width:135.5px;text-align:right;color:#242424;font-size:11.18px">20 932,03</div>
<div class="t" style="left:10px;top:220.2px;color:#242424;font-size:11.18px;font-size:11px">4.8-1-21</div>
<svg style="left:125px;top:236px" width="11" height="11" viewBox="0 0 11 11"><rect x="0.5" y="0.5" width="9.5" height="9.5" fill="none" stroke="#7058c4" stroke-width="1"/><path d="M5.25 2.6 V7.9 M2.6 5.25 H7.9" stroke="#512da8" stroke-width="1.1"/></svg>
<div class="t" style="left:150.5px;top:221.3px;color:#242424;font-size:11.18px;line-height:13px">Монтаж <span style="background:#ffa000;padding:0.4px 0 0.6px">трансформатора</span> или <span style="background:#ffa000;padding:0.4px 0 0.6px">автотрансформатора</span> силового трехфазного напряжением</div>
<div class="t" style="left:150.5px;top:234.3px;color:#242424;font-size:11.18px;line-height:13px">330 кВ, мощностью 125000-400000 кВ•А</div>
<div class="t" style="left:650px;top:220.0px;color:#242424;font-size:11.18px">1 шт.</div>
<div class="t" style="left:780px;top:220.0px;width:135.5px;text-align:right;color:#242424;font-size:11.18px">25 298,69</div>
<div class="t" style="left:10px;top:256.2px;color:#242424;font-size:11.18px;font-size:11px">4.8-1-22</div>
<svg style="left:125px;top:272px" width="11" height="11" viewBox="0 0 11 11"><rect x="0.5" y="0.5" width="9.5" height="9.5" fill="none" stroke="#7058c4" stroke-width="1"/><path d="M5.25 2.6 V7.9 M2.6 5.25 H7.9" stroke="#512da8" stroke-width="1.1"/></svg>
<div class="t" style="left:150.5px;top:257.3px;color:#242424;font-size:11.18px;line-height:13px">Монтаж <span style="background:#ffa000;padding:0.4px 0 0.6px">трансформатора</span> или <span style="background:#ffa000;padding:0.4px 0 0.6px">автотрансформатора</span> силового трехфазного напряжением</div>
<div class="t" style="left:150.5px;top:270.3px;color:#242424;font-size:11.18px;line-height:13px">330 кВ мощностью 1250000 кВ•А</div>
<div class="t" style="left:650px;top:256.0px;color:#242424;font-size:11.18px">1 шт.</div>
<div class="t" style="left:780px;top:256.0px;width:135.5px;text-align:right;color:#242424;font-size:11.18px">33 376,39</div>
<div class="t" style="left:10px;top:292.2px;color:#242424;font-size:11.18px;font-size:11px">4.8-1-23</div>
<svg style="left:125px;top:308px" width="11" height="11" viewBox="0 0 11 11"><rect x="0.5" y="0.5" width="9.5" height="9.5" fill="none" stroke="#7058c4" stroke-width="1"/><path d="M5.25 2.6 V7.9 M2.6 5.25 H7.9" stroke="#512da8" stroke-width="1.1"/></svg>
<div class="t" style="left:150.5px;top:293.3px;color:#242424;font-size:11.18px;line-height:13px">Монтаж <span style="background:#ffa000;padding:0.4px 0 0.6px">трансформатора</span> или <span style="background:#ffa000;padding:0.4px 0 0.6px">автотрансформатора</span> силового однофазного напряжением</div>
<div class="t" style="left:150.5px;top:306.3px;color:#242424;font-size:11.18px;line-height:13px">330 кВ мощностью 133000 кВ•А</div>
<div class="t" style="left:650px;top:292.0px;color:#242424;font-size:11.18px">1 шт.</div>
<div class="t" style="left:780px;top:292.0px;width:135.5px;text-align:right;color:#242424;font-size:11.18px">18 265,62</div>
<div class="t" style="left:10px;top:328.2px;color:#242424;font-size:11.18px;font-size:11px">4.8-1-24</div>
<svg style="left:125px;top:344px" width="11" height="11" viewBox="0 0 11 11"><rect x="0.5" y="0.5" width="9.5" height="9.5" fill="none" stroke="#7058c4" stroke-width="1"/><path d="M5.25 2.6 V7.9 M2.6 5.25 H7.9" stroke="#512da8" stroke-width="1.1"/></svg>
<div class="t" style="left:150.5px;top:329.3px;color:#242424;font-size:11.18px;line-height:13px">Монтаж <span style="background:#ffa000;padding:0.4px 0 0.6px">трансформатора</span> или <span style="background:#ffa000;padding:0.4px 0 0.6px">автотрансформатора</span> силового трехфазного напряжением</div>
<div class="t" style="left:150.5px;top:342.3px;color:#242424;font-size:11.18px;line-height:13px">500 кВ мощностью, 250000 кВ•А</div>
<div class="t" style="left:650px;top:328.0px;color:#242424;font-size:11.18px">1 шт.</div>
<div class="t" style="left:780px;top:328.0px;width:135.5px;text-align:right;color:#242424;font-size:11.18px">22 554,13</div>
<div class="t" style="left:10px;top:364.2px;color:#242424;font-size:11.18px;font-size:11px">4.8-1-25</div>
<svg style="left:125px;top:380px" width="11" height="11" viewBox="0 0 11 11"><rect x="0.5" y="0.5" width="9.5" height="9.5" fill="none" stroke="#7058c4" stroke-width="1"/><path d="M5.25 2.6 V7.9 M2.6 5.25 H7.9" stroke="#512da8" stroke-width="1.1"/></svg>
<div class="t" style="left:150.5px;top:365.3px;color:#242424;font-size:11.18px;line-height:13px">Монтаж <span style="background:#ffa000;padding:0.4px 0 0.6px">трансформатора</span> или <span style="background:#ffa000;padding:0.4px 0 0.6px">автотрансформатора</span> силового трехфазного напряжением</div>
<div class="t" style="left:150.5px;top:378.3px;color:#242424;font-size:11.18px;line-height:13px">500 кВ, мощностью 400000 кВ•А</div>
<div class="t" style="left:650px;top:364.0px;color:#242424;font-size:11.18px">1 шт.</div>
<div class="t" style="left:780px;top:364.0px;width:135.5px;text-align:right;color:#242424;font-size:11.18px">26 440,02</div>
<div class="t" style="left:10px;top:400.2px;color:#242424;font-size:11.18px;font-size:11px">4.8-1-26</div>
<svg style="left:125px;top:416px" width="11" height="11" viewBox="0 0 11 11"><rect x="0.5" y="0.5" width="9.5" height="9.5" fill="none" stroke="#7058c4" stroke-width="1"/><path d="M5.25 2.6 V7.9 M2.6 5.25 H7.9" stroke="#512da8" stroke-width="1.1"/></svg>
<div class="t" style="left:150.5px;top:401.3px;color:#242424;font-size:11.18px;line-height:13px">Монтаж <span style="background:#ffa000;padding:0.4px 0 0.6px">трансформатора</span> или <span style="background:#ffa000;padding:0.4px 0 0.6px">автотрансформатора</span> силового трехфазного напряжением</div>
<div class="t" style="left:150.5px;top:414.3px;color:#242424;font-size:11.18px;line-height:13px">500 кВ, мощностью 630000, 1000000 кВ•А</div>
<div class="t" style="left:650px;top:400.0px;color:#242424;font-size:11.18px">1 шт.</div>
<div class="t" style="left:780px;top:400.0px;width:135.5px;text-align:right;color:#242424;font-size:11.18px">30 904,09</div>
<div class="t" style="left:10px;top:436.2px;color:#242424;font-size:11.18px;font-size:11px">4.8-1-27</div>
<svg style="left:125px;top:452px" width="11" height="11" viewBox="0 0 11 11"><rect x="0.5" y="0.5" width="9.5" height="9.5" fill="none" stroke="#7058c4" stroke-width="1"/><path d="M5.25 2.6 V7.9 M2.6 5.25 H7.9" stroke="#512da8" stroke-width="1.1"/></svg>
<div class="t" style="left:150.5px;top:437.3px;color:#242424;font-size:11.18px;line-height:13px">Монтаж <span style="background:#ffa000;padding:0.4px 0 0.6px">трансформатора</span> или <span style="background:#ffa000;padding:0.4px 0 0.6px">автотрансформатора</span> силового однофазного напряжением</div>
<div class="t" style="left:150.5px;top:450.3px;color:#242424;font-size:11.18px;line-height:13px">500 кВ, мощностью 135000, 167000 кВ•А</div>
<div class="t" style="left:650px;top:436.0px;color:#242424;font-size:11.18px">1 шт.</div>
<div class="t" style="left:780px;top:436.0px;width:135.5px;text-align:right;color:#242424;font-size:11.18px">17 508,56</div>
<div class="t" style="left:10px;top:472.2px;color:#242424;font-size:11.18px;font-size:11px">4.8-1-28</div>
<svg style="left:125px;top:488px" width="11" height="11" viewBox="0 0 11 11"><rect x="0.5" y="0.5" width="9.5" height="9.5" fill="none" stroke="#7058c4" stroke-width="1"/><path d="M5.25 2.6 V7.9 M2.6 5.25 H7.9" stroke="#512da8" stroke-width="1.1"/></svg>
<div class="t" style="left:150.5px;top:473.3px;color:#242424;font-size:11.18px;line-height:13px">Монтаж <span style="background:#ffa000;padding:0.4px 0 0.6px">трансформатора</span> или <span style="background:#ffa000;padding:0.4px 0 0.6px">автотрансформатора</span> силового однофазного напряжением</div>
<div class="t" style="left:150.5px;top:486.3px;color:#242424;font-size:11.18px;line-height:13px">500 кВ, мощностью 267000 кВ•А</div>
<div class="t" style="left:650px;top:472.0px;color:#242424;font-size:11.18px">1 шт.</div>
<div class="t" style="left:780px;top:472.0px;width:135.5px;text-align:right;color:#242424;font-size:11.18px">19 312,84</div>
<div class="t" style="left:10px;top:508.2px;color:#242424;font-size:11.18px;font-size:11px">4.8-1-29</div>
<svg style="left:125px;top:524px" width="11" height="11" viewBox="0 0 11 11"><rect x="0.5" y="0.5" width="9.5" height="9.5" fill="none" stroke="#7058c4" stroke-width="1"/><path d="M5.25 2.6 V7.9 M2.6 5.25 H7.9" stroke="#512da8" stroke-width="1.1"/></svg>
<div class="t" style="left:150.5px;top:509.3px;color:#242424;font-size:11.18px;line-height:13px">Монтаж <span style="background:#ffa000;padding:0.4px 0 0.6px">трансформатора</span> или <span style="background:#ffa000;padding:0.4px 0 0.6px">автотрансформатора</span> силового однофазного напряжением</div>
<div class="t" style="left:150.5px;top:522.3px;color:#242424;font-size:11.18px;line-height:13px">500 кВ, мощностью 533000 кВ•А</div>
<div class="t" style="left:650px;top:508.0px;color:#242424;font-size:11.18px">1 шт.</div>
<div class="t" style="left:780px;top:508.0px;width:135.5px;text-align:right;color:#242424;font-size:11.18px">20 362,30</div>
</div>
<div class="a" style="left:380px;top:211px;width:996px;height:37px;background:#ebebeb;border:2px solid #512da8;border-right:none"></div>
<div class="t" style="left:391px;top:215.8px;color:#1e1e1e;font-size:11px;-webkit-text-stroke:0.45px #1e1e1e;letter-spacing:0.13px;line-height:13px">Дополнение 75 / Глава 4. Сборники норм и расценок на монтаж оборудования / Сборник 8. Электротехнические</div>
<div class="t" style="left:391px;top:228.8px;color:#1e1e1e;font-size:11px;-webkit-text-stroke:0.45px #1e1e1e;letter-spacing:0.13px;line-height:13px">установки</div>
<div class="a" style="left:1374px;top:211px;width:27px;height:589px;background:#fff"></div>
<div class="a" style="left:1376px;top:210px;width:25px;height:1px;background:#ddd3f0"></div>
<div class="a" style="left:1380px;top:211px;width:1px;height:571px;background:#d8cdee"></div>
<div class="a" style="left:1374px;top:211px;width:6px;height:76px;background:#a994d5;border-radius:3px"></div>
<div class="a" style="left:380px;top:775px;width:994px;height:1px;background:#d8cdee"></div>
<div class="a" style="left:1019px;top:781px;width:362px;height:1px;background:#d8cdee"></div>
<div class="a" style="left:1019px;top:793px;width:376px;height:1px;background:#d8cdee"></div>
<div class="a" style="left:1019px;top:793px;width:1px;height:7px;background:#d8cdee"></div>
<div class="a" style="left:1020px;top:776px;width:150px;height:5px;background:#a994d5;border-radius:3px"></div>
<div class="a" style="left:1393px;top:781px;width:3px;height:3px;background:#a0a0a0;border-radius:50%"></div>
<div class="a" style="left:1388px;top:786px;width:3px;height:3px;background:#a0a0a0;border-radius:50%"></div>
<div class="a" style="left:1393px;top:786px;width:3px;height:3px;background:#a0a0a0;border-radius:50%"></div>
<div class="a" style="left:1383px;top:791px;width:3px;height:3px;background:#a0a0a0;border-radius:50%"></div>
<div class="a" style="left:1388px;top:791px;width:3px;height:3px;background:#a0a0a0;border-radius:50%"></div>
<div class="a" style="left:1393px;top:791px;width:3px;height:3px;background:#a0a0a0;border-radius:50%"></div>
<div class="a" style="left:3px;top:800px;width:1400px;height:1px;background:#c8c8c8"></div>
</body></html>
